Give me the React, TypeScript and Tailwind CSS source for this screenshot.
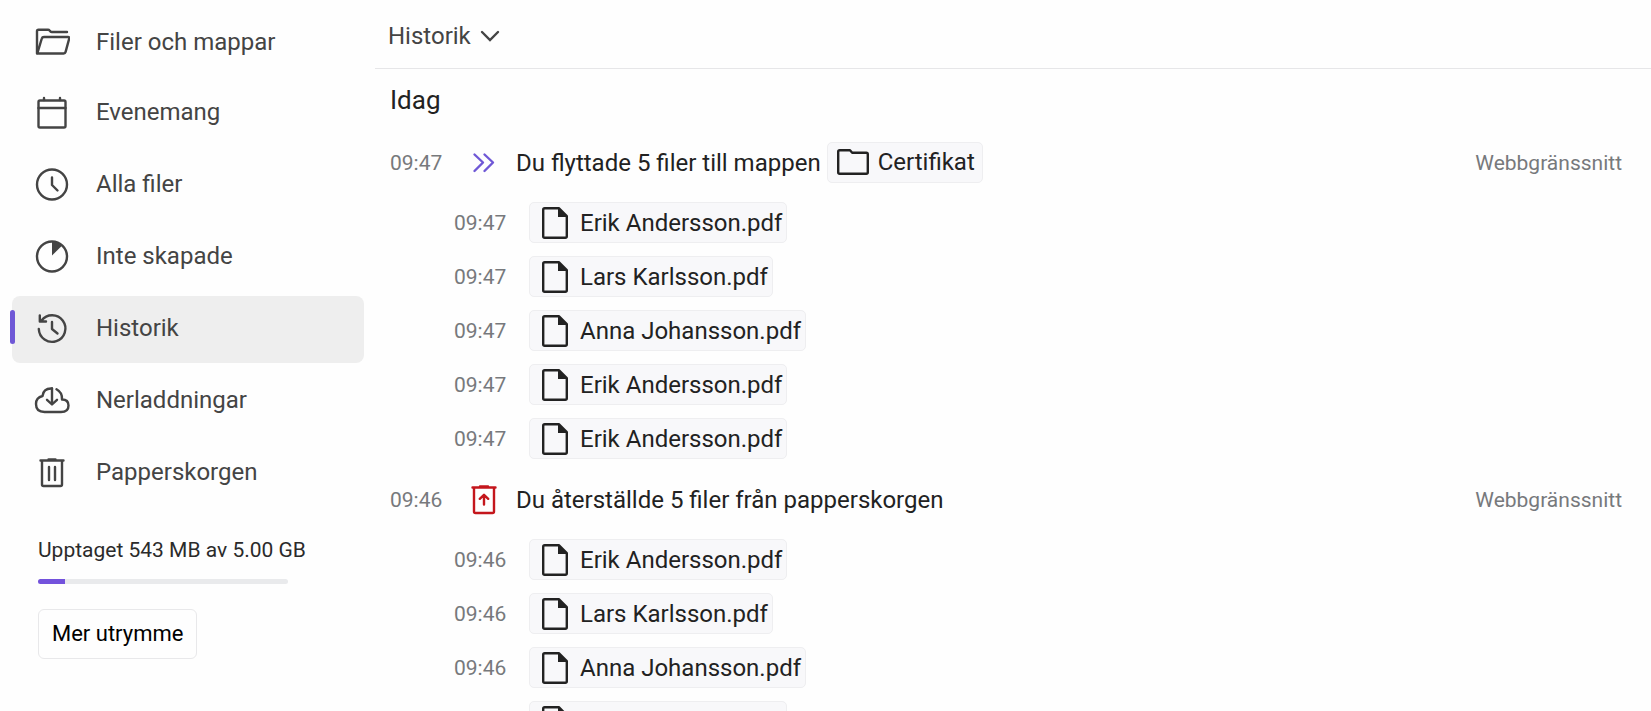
import type { ReactNode } from 'react';

type IconProps = { children: ReactNode; className?: string };

function Icon({ children, className = '' }: IconProps) {
  return (
    <svg
      viewBox="0 0 36 36"
      className={`size-9 shrink-0 ${className}`}
      fill="none"
      stroke="currentColor"
      strokeWidth="2.4"
      strokeLinecap="round"
      strokeLinejoin="round"
      aria-hidden="true"
    >
      {children}
    </svg>
  );
}

const FolderOpenIcon = () => (
  <Icon>
    <path d="M3 29.500V7.200q0-1.500 1.500-1.500h9.500q1 0 1.600.8l.8.9q.5.600 1.400.6H33" />
    <path d="M10 13H34q1.600 0 1.200 1.500l-3.600 13.400q-.4 1.600-2 1.600H4.500q-1.200 0-.9-1.200L7.800 14.500Q8.200 13 10 13z" />
  </Icon>
);

const CalendarIcon = () => (
  <Icon>
    <rect x="4.500" y="6.500" width="27" height="27" rx="1.500" />
    <path d="M4.500 14h27M10 6V4M26 6V4" />
  </Icon>
);

const ClockIcon = () => (
  <Icon>
    <circle cx="18" cy="18.500" r="15" />
    <path d="M18 11.500v7.500l5.500 5.500" />
  </Icon>
);

const PieIcon = () => (
  <Icon>
    <circle cx="18" cy="18.500" r="15" />
    <path d="M18 3.500a15 15 0 0 1 10.200 4L18 17.500z" fill="currentColor" stroke="none" />
  </Icon>
);

const HistoryIcon = () => (
  <Icon>
    <path d="M4.800 19A13.300 13.300 0 1 0 7.500 10.500M5.800 5.500V11.500H12" />
    <path d="M18 12v7l5.500 4.500" />
  </Icon>
);

const CloudIcon = () => (
  <Icon>
    <path d="M18 6.500Q9.500 6 8.500 14Q2 15.500 2 22Q2 30 10.500 30H27Q34.500 30 34.500 23.500Q34.500 17.500 28 17.500Q28.500 10.500 22.500 7.300" />
    <path d="M18 6.500V22M13 17.800L18 22.500L23 17.800" />
  </Icon>
);

const TrashIcon = () => (
  <Icon>
    <path d="M6.500 6.500h23M14.500 5.500h7M8 7v23.500q0 1.500 1.500 1.500h17q1.500 0 1.500-1.500V7M15 13v13M21 13v13" />
  </Icon>
);

const MoveIcon = () => (
  <Icon className="text-[#6f58d6]">
    <path d="M8.500 9.500l8.500 8-8.500 8.500M18.500 9.500l8.500 8-8.500 8.500" />
  </Icon>
);

const RestoreIcon = () => (
  <Icon className="text-[#c4161c]">
    <path d="M6.500 5.500h23M14 4.500h8M8 6.500v23q0 1.500 1.500 1.500h17q1.500 0 1.500-1.500v-23M18 22.500V13M13.800 16.800L18 12.800l4.200 4" />
  </Icon>
);

const FileIcon = () => (
  <svg viewBox="0 0 26 32" className="h-8 w-[26px] shrink-0" fill="none" stroke="currentColor" strokeWidth="2.4" strokeLinejoin="round" aria-hidden="true">
    <path d="M1.200 2.700Q1.200 1.200 2.700 1.200H16.800l8 8v20.100q0 1.500-1.500 1.500H2.700q-1.500 0-1.500-1.500z" />
    <path d="M16 1v9h9z" fill="currentColor" stroke="none" />
  </svg>
);

const FolderIcon = () => (
  <svg viewBox="0 0 32 26" className="h-[26px] w-8 shrink-0" fill="none" stroke="currentColor" strokeWidth="2.4" strokeLinejoin="round" aria-hidden="true">
    <path d="M1.200 2.700Q1.200 1.200 2.700 1.200H13l2.200 2.500H29.300q1.500 0 1.500 1.500v18.100q0 1.500-1.500 1.500H2.700q-1.500 0-1.500-1.500z" />
  </svg>
);

type NavItem = { label: string; icon: ReactNode; active?: boolean };

const library: NavItem[] = [
  { label: 'Evenemang', icon: <CalendarIcon /> },
  { label: 'Alla filer', icon: <ClockIcon /> },
  { label: 'Inte skapade', icon: <PieIcon /> },
  { label: 'Historik', icon: <HistoryIcon />, active: true },
  { label: 'Nerladdningar', icon: <CloudIcon /> },
  { label: 'Papperskorgen', icon: <TrashIcon /> },
];

const events = [
  {
    time: '09:47',
    icon: <MoveIcon />,
    text: 'Du flyttade 5 filer till mappen',
    folder: 'Certifikat',
    files: ['Erik Andersson.pdf', 'Lars Karlsson.pdf', 'Anna Johansson.pdf', 'Erik Andersson.pdf', 'Erik Andersson.pdf'],
  },
  {
    time: '09:46',
    icon: <RestoreIcon />,
    text: 'Du återställde 5 filer från papperskorgen',
    files: ['Erik Andersson.pdf', 'Lars Karlsson.pdf', 'Anna Johansson.pdf', 'Erik Andersson.pdf', 'Erik Andersson.pdf'],
  },
];

function NavLink({ label, icon, active }: NavItem) {
  return (
    <a
      href="#"
      aria-current={active ? 'page' : undefined}
      className={`relative flex h-[67px] items-center gap-[26px] rounded-lg pb-[3px] pl-[22px] text-2xl text-[#444] ${active ? 'bg-[#eee]' : ''}`}
    >
      {active && <span className="absolute top-3.5 -left-0.5 h-[34px] w-[5px] rounded-sm bg-[#6f58d6]" />}
      {icon}
      {label}
    </a>
  );
}

function Sidebar() {
  return (
    <aside className="w-[375px] shrink-0 pr-[11px] pl-3">
      <nav className="flex flex-col gap-[3px] pt-2.5">
        <NavLink label="Filer och mappar" icon={<FolderOpenIcon />} />
        <div className="flex flex-col gap-[5px]">
          {library.map((item) => (
            <NavLink key={item.label} {...item} />
          ))}
        </div>
      </nav>
      <div className="pt-[29px] pl-[26px] text-[#2b2b2b]">
        <label htmlFor="storage" className="block text-[21px] leading-7">
          Upptaget 543 MB av 5.00 GB
        </label>
        <progress
          id="storage"
          value={543}
          max={5120}
          className="mt-[15px] block h-[5px] w-[250px] appearance-none overflow-hidden rounded-full [&::-webkit-progress-bar]:bg-[#e9eaec] [&::-webkit-progress-value]:bg-[#7352dc]"
        />
        <button type="button" className="mt-[25px] h-[50px] rounded-md border border-[#e8e8ea] px-[13px] text-[22px] text-black">
          Mer utrymme
        </button>
      </div>
    </aside>
  );
}

function Chip({ icon, label, className }: { icon: ReactNode; label: string; className: string }) {
  return (
    <a href="#" className={`flex h-[41px] items-center rounded-[5px] border border-[#eeeef0] bg-[#f8f8fa] ${className}`}>
      {icon}
      {label}
    </a>
  );
}

export default function App() {
  return (
    <div className="flex h-screen overflow-hidden bg-[#fefefe] font-[Roboto,sans-serif] text-2xl text-[#222]">
      <Sidebar />
      <main className="min-w-0 flex-1">
        <header className="flex h-[69px] items-center border-b border-[#e6e6e8] pl-[13px]">
          <button type="button" className="flex items-center gap-[9px] pt-1 text-[#444]">
            Historik
            <svg viewBox="0 0 20 12" className="h-3 w-5" fill="none" stroke="currentColor" strokeWidth="2.4" strokeLinecap="round" aria-hidden="true">
              <path d="M2 2l8 8 8-8" />
            </svg>
          </button>
        </header>
        <section className="pr-[29px] pl-[15px]">
          <h2 className="pt-[15px] pb-[26px] text-[26px] leading-8">Idag</h2>
          <div className="flex flex-col gap-5">
            {events.map((event) => (
              <article key={event.time}>
                <div className="flex h-[41px] items-center">
                  <time className="w-[76px] text-[21px] text-[#77797c]">{event.time}</time>
                  {event.icon}
                  <p className="pl-3.5">{event.text}</p>
                  {event.folder && <Chip icon={<FolderIcon />} label={event.folder} className="ml-1.5 gap-[9px] pr-[7px] pb-0.5 pl-[9px]" />}
                  <span className="ml-auto text-[21px] text-[#77797c]">Webbgränssnitt</span>
                </div>
                <ul className="flex flex-col gap-[13px] pt-[19px] pl-16">
                  {event.files.map((file, i) => (
                    <li key={i} className="flex items-center">
                      <time className="w-[75px] text-[21px] text-[#77797c]">{event.time}</time>
                      <Chip icon={<FileIcon />} label={file} className="gap-3 pr-1 pl-3" />
                    </li>
                  ))}
                </ul>
              </article>
            ))}
          </div>
        </section>
      </main>
    </div>
  );
}
